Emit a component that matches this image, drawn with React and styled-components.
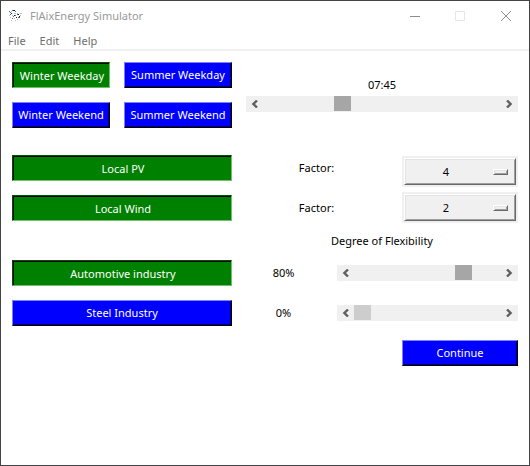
import React, { useState } from "react";
import styled, { createGlobalStyle } from "styled-components";

const GlobalStyle = createGlobalStyle`
  *, *::before, *::after { box-sizing: border-box; }
  body { margin: 0; background: #fff; }
  body, button, select, input {
    font-family: "Noto Sans", "Open Sans", sans-serif;
    font-size: 11px;
    line-height: 16px;
  }
`;

const Window = styled.div`
  display: flex;
  flex-direction: column;
  min-height: 100vh;
  border: 1px solid #434345;
  background: #fff;
  color: #000;
`;

const TitleBar = styled.header`
  display: flex;
  align-items: center;
  height: 30px;
  padding-left: 8px;
  color: #999;
`;

const Title = styled.h1`
  flex: 1;
  margin: 0 0 0 8px;
  font-size: 11px;
  font-weight: 400;
`;

const CaptionButton = styled.button`
  display: grid;
  place-items: center;
  width: 45px;
  height: 28px;
  padding: 0;
  border: 0;
  background: none;
  color: ${(p) => (p.disabled ? "#e6e6e6" : "#8c8c8c")};

  &:last-child {
    width: 47px;
  }
`;

const MenuBar = styled.nav`
  display: flex;
  gap: 14px;
  height: 20px;
  padding: 1px 7px 0;
  border-bottom: 2px solid #f0f0f0;
`;

const MenuItem = styled.button`
  padding: 0;
  border: 0;
  background: none;
  color: #6d6d6d;
`;

const Content = styled.main`
  display: flex;
  flex-direction: column;
  padding: 11px 11px 0;
`;

const Section = styled.section`
  display: grid;
  grid-template-columns: 220px ${(p) => p.$columns};
  margin-bottom: ${(p) => p.$after || 0}px;
`;

const DayGrid = styled.div`
  display: grid;
  grid-template-columns: 98px 108px;
  gap: 14px;
`;

const Stack = styled.div`
  display: flex;
  flex-direction: column;
  gap: 14px;
`;

const RaisedButton = styled.button`
  height: 26px;
  padding: 0;
  border: 1px solid;
  border-color: #7f7fff #000 #000 #7f7fff;
  background: #00f;
  box-shadow: inset -1px -1px #000080;
  color: #fff;
  white-space: nowrap;
`;

const ToggleButton = styled(RaisedButton)`
  &[aria-pressed="true"] {
    padding: 2px 0 0 2px;
    border-color: #005000 #6fbf6f #6fbf6f #005000;
    background: #008000;
    box-shadow: inset 1px 1px #000;
  }
`;

const ContinueButton = styled(RaisedButton)`
  align-self: flex-end;
  width: 116px;
`;

const TimePanel = styled.div`
  display: flex;
  flex-direction: column;
  justify-content: flex-end;
  gap: 3px;
  padding: 0 0 16px 14px;
`;

const Caption = styled.label`
  text-align: center;
  line-height: ${(p) => p.$line || 16}px;
`;

const FactorLabels = styled(Stack)`
  padding: 0 15px 0 14px;
`;

const SelectStack = styled(Stack)`
  gap: 5px;
  padding-top: 1px;
`;

const SelectFrame = styled.div`
  display: grid;
  grid-template-columns: 1fr;
  align-items: center;
  height: 31px;
  padding: 2px;
  background: #f0f0f0;
`;

const FactorSelect = styled.select`
  grid-area: 1 / 1;
  appearance: none;
  width: 100%;
  height: 27px;
  padding: 1px 28px 0 0;
  border: 1px solid;
  border-color: #fff #696969 #696969 #fff;
  border-radius: 0;
  background: #f0f0f0;
  box-shadow: inset 1px 1px #e3e3e3, inset -1px -1px #a0a0a0;
  color: #000;
  text-align-last: center;
`;

const SelectIndicator = styled.span`
  grid-area: 1 / 1;
  justify-self: end;
  width: 15px;
  height: 6px;
  margin-right: 8px;
  border: 1px solid;
  border-color: #fff #696969 #696969 #fff;
  box-shadow: inset 1px 1px #e3e3e3, inset -1px -1px #a0a0a0;
  pointer-events: none;
`;

const FlexHeading = styled.h2`
  margin: 0 0 11px 234px;
  font-size: 11px;
  font-weight: 400;
  text-align: center;
`;

const ScrollTrack = styled.div`
  display: flex;
  height: 16px;
  background: #f0f0f0;
`;

const ArrowButton = styled.button`
  display: grid;
  place-items: center;
  width: 17px;
  padding: 0;
  border: 0;
  background: none;
  color: #606060;
`;

const Range = styled.input`
  appearance: none;
  flex: 1;
  min-width: 0;
  height: 16px;
  margin: 0;
  background: transparent;

  &::-webkit-slider-thumb {
    appearance: none;
    width: 17px;
    height: 16px;
    border: 0;
    border-bottom: 1px solid #f0f0f0;
    border-radius: 0;
    background: ${(p) => (p.$light ? "#cdcdcd" : "#a6a6a6")};
  }
`;

const LevelStack = styled(Stack)`
  padding: 0 16px 0 14px;
`;

const SliderStack = styled(Stack)`
  gap: 24px;
  padding-top: 5px;
`;

const Arrow = ({ right }) => (
  <svg width="7" height="8" viewBox="0 0 7 8" fill="none" stroke="currentColor" strokeWidth="2.4">
    <path d={right ? "M1 .5 4.6 4 1 7.5" : "M6 .5 2.4 4 6 7.5"} />
  </svg>
);

function Scrollbar({ id, label, value, max, step = 1, light, onChange }) {
  const move = (delta) => onChange(Math.min(max, Math.max(0, value + delta)));
  return (
    <ScrollTrack>
      <ArrowButton aria-label={`Decrease ${label}`} onClick={() => move(-step)}>
        <Arrow />
      </ArrowButton>
      <Range
        id={id}
        type="range"
        aria-label={label}
        min="0"
        max={max}
        value={value}
        $light={light}
        onChange={(e) => onChange(Number(e.target.value))}
      />
      <ArrowButton aria-label={`Increase ${label}`} onClick={() => move(step)}>
        <Arrow right />
      </ArrowButton>
    </ScrollTrack>
  );
}

function Factor({ id, initial }) {
  const [value, setValue] = useState(initial);
  return (
    <SelectFrame>
      <FactorSelect id={id} value={value} onChange={(e) => setValue(e.target.value)}>
        {[1, 2, 3, 4, 5].map((n) => (
          <option key={n}>{n}</option>
        ))}
      </FactorSelect>
      <SelectIndicator />
    </SelectFrame>
  );
}

const logoDots = [
  ["#222", "M4 0h2M2 3h1M5 5h1M9 4h1M7 7h1M10 6h1"],
  ["#2b7fc0", "M0 1h1M1 2h1M8 4h1M6 5h1"],
  ["#666", "M3 0h1M6 1h1M1 4h1M4 6h1M9 7h2M3 8h1"],
  ["#bbb", "M2 1h1M5 3h2M0 5h1M3 5h1M8 3h1M11 3h2M11 5h1M1 7h1M5 8h1M8 9h1M2 10h1M6 10h1"],
];

const AppLogo = () => (
  <svg width="13" height="12" viewBox="0 -.5 13 12" shapeRendering="crispEdges" aria-hidden="true">
    {logoDots.map(([color, d]) => (
      <path key={color} d={d} stroke={color} />
    ))}
  </svg>
);

const pad = (n) => String(n).padStart(2, "0");

export default function App() {
  const [day, setDay] = useState("Winter Weekday");
  const [quarter, setQuarter] = useState(31);
  const [active, setActive] = useState({
    "Local PV": true,
    "Local Wind": true,
    "Automotive industry": true,
    "Steel Industry": false,
  });
  const [auto, setAuto] = useState(78);
  const [steel, setSteel] = useState(0);

  const toggle = (name) => (
    <ToggleButton
      aria-pressed={active[name]}
      onClick={() => setActive({ ...active, [name]: !active[name] })}
    >
      {name}
    </ToggleButton>
  );

  return (
    <>
      <GlobalStyle />
      <Window>
        <TitleBar>
          <AppLogo />
          <Title>FlAixEnergy Simulator</Title>
          <CaptionButton aria-label="Minimize">
            <svg width="10" height="10" stroke="currentColor"><path d="M0 5.5h10" /></svg>
          </CaptionButton>
          <CaptionButton aria-label="Maximize" disabled>
            <svg width="10" height="10" fill="none" stroke="currentColor"><path d="M.5.5h9v9h-9z" /></svg>
          </CaptionButton>
          <CaptionButton aria-label="Close">
            <svg width="10" height="10" stroke="currentColor"><path d="M0 0 10 10M10 0 0 10" /></svg>
          </CaptionButton>
        </TitleBar>
        <MenuBar>
          {["File", "Edit", "Help"].map((name) => (
            <MenuItem key={name}>{name}</MenuItem>
          ))}
        </MenuBar>

        <Content>
          <Section $columns="1fr" $after={27}>
            <DayGrid>
              {["Winter Weekday", "Summer Weekday", "Winter Weekend", "Summer Weekend"].map((name) => (
                <ToggleButton key={name} aria-pressed={day === name} onClick={() => setDay(name)}>
                  {name}
                </ToggleButton>
              ))}
            </DayGrid>
            <TimePanel>
              <Caption htmlFor="time">
                {pad(Math.floor(quarter / 4))}:{pad((quarter % 4) * 15)}
              </Caption>
              <Scrollbar id="time" label="Time of day" value={quarter} max={96} onChange={setQuarter} />
            </TimePanel>
          </Section>

          <Section $columns="1fr 116px" $after={10}>
            <Stack>
              {toggle("Local PV")}
              {toggle("Local Wind")}
            </Stack>
            <FactorLabels>
              <Caption htmlFor="pv-factor" $line={26}>Factor:</Caption>
              <Caption htmlFor="wind-factor" $line={26}>Factor:</Caption>
            </FactorLabels>
            <SelectStack>
              <Factor id="pv-factor" initial="4" />
              <Factor id="wind-factor" initial="2" />
            </SelectStack>
          </Section>

          <FlexHeading>Degree of Flexibility</FlexHeading>
          <Section $columns="105px 1fr" $after={14}>
            <Stack>
              {toggle("Automotive industry")}
              {toggle("Steel Industry")}
            </Stack>
            <LevelStack>
              <Caption htmlFor="auto" $line={26}>{Math.round(auto / 5) * 5}%</Caption>
              <Caption htmlFor="steel" $line={26}>{Math.round(steel / 5) * 5}%</Caption>
            </LevelStack>
            <SliderStack>
              <Scrollbar id="auto" label="Automotive flexibility" value={auto} max={100} onChange={setAuto} />
              <Scrollbar id="steel" label="Steel flexibility" value={steel} max={100} light onChange={setSteel} />
            </SliderStack>
          </Section>

          <ContinueButton>Continue</ContinueButton>
        </Content>
      </Window>
    </>
  );
}
